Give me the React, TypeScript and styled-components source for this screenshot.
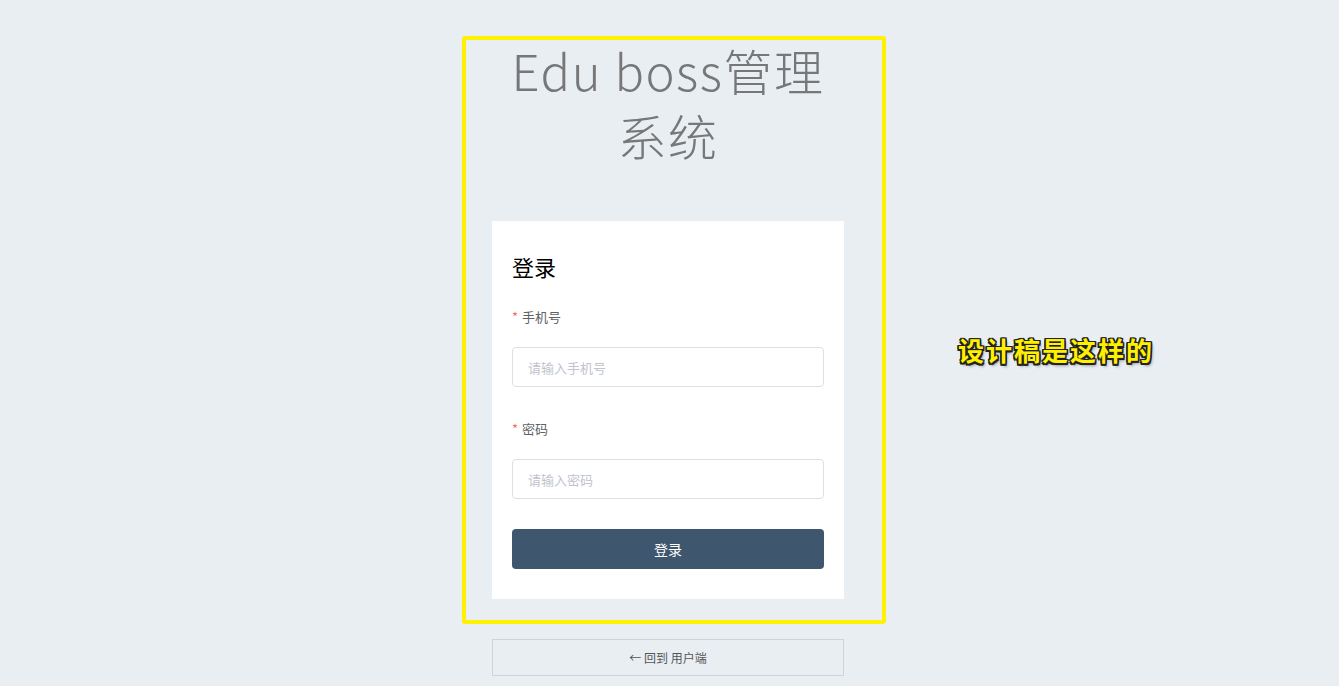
import styled, { createGlobalStyle } from 'styled-components';

const GlobalStyle = createGlobalStyle`
    html, body {
        margin: 0;
        padding: 0;
        background: #e9eef3;
        font-family: 'Noto Sans CJK SC', 'Noto Sans', sans-serif;
    }
`;

const Page = styled.div`
    min-height: 686px;
    padding: 37px 3px 0 0;
    box-sizing: border-box;
`;

const Column = styled.div`
    position: relative;
    width: 352px;
    margin: 0 auto;
`;

const Highlight = styled.div`
    position: absolute;
    left: -30px;
    top: -1px;
    width: 424px;
    height: 588px;
    border: 4px solid #fff200;
    border-radius: 3px;
    box-sizing: border-box;
    pointer-events: none;
`;

const Note = styled.div`
    position: absolute;
    left: 466px;
    top: 294px;
    white-space: nowrap;
    font-size: 26px;
    font-weight: 700;
    color: #fff000;
    letter-spacing: 2px;
    text-shadow:
        -1.5px -1.5px 0 #222, 1.5px -1.5px 0 #222, -1.5px 1.5px 0 #222, 1.5px 1.5px 0 #222,
        0 -1.5px 0 #222, 0 1.5px 0 #222, -1.5px 0 0 #222, 1.5px 0 0 #222,
        2px 3px 3px rgba(0, 0, 0, 0.35);
`;

const Title = styled.h1`
    margin: 0 0 54px;
    padding: 0 8px;
    text-align: center;
    font-size: 49px;
    font-weight: 300;
    line-height: 65px;
    color: #777;
    letter-spacing: 1.5px;
`;

const Card = styled.div`
    background: #fff;
    padding: 30px 20px;
`;

const Heading = styled.h2`
    margin: 0 0 16px;
    font-size: 22px;
    font-weight: 400;
    line-height: 30px;
    color: #000;
`;

const Field = styled.div`
    margin-bottom: 22px;
`;

const Label = styled.label`
    display: block;
    line-height: 40px;
    margin-bottom: 10px;
    font-size: 13px;
    color: #606266;

    &::before {
        content: '*';
        color: #f56c6c;
        margin-right: 4px;
    }
`;

const Input = styled.input`
    display: block;
    width: 100%;
    height: 40px;
    box-sizing: border-box;
    padding: 0 15px;
    border: 1px solid #dcdfe6;
    border-radius: 4px;
    font-family: inherit;
    font-size: 13px;
    color: #606266;
    outline: none;

    &::placeholder {
        color: #c0c4cc;
    }
`;

const SubmitButton = styled.button`
    display: block;
    width: 100%;
    height: 40px;
    margin-top: 30px;
    border: none;
    border-radius: 4px;
    background: #3e566e;
    color: #fff;
    font-family: inherit;
    font-size: 14px;
    cursor: pointer;
`;

const BackButton = styled.button`
    display: block;
    width: 100%;
    height: 37px;
    margin-top: 40px;
    border: 1px solid #cfd3d7;
    background: transparent;
    color: #555;
    font-family: inherit;
    font-size: 12px;
    cursor: pointer;
`;

const App = () => {
    return (
        <Page>
            <GlobalStyle />
            <Column>
                <Title>Edu boss管理系统</Title>
                <Card>
                    <Heading>登录</Heading>
                    <form onSubmit={(e) => e.preventDefault()}>
                        <Field>
                            <Label htmlFor="phone">手机号</Label>
                            <Input id="phone" type="text" placeholder="请输入手机号" />
                        </Field>
                        <Field>
                            <Label htmlFor="password">密码</Label>
                            <Input id="password" type="password" placeholder="请输入密码" />
                        </Field>
                        <SubmitButton type="submit">登录</SubmitButton>
                    </form>
                </Card>
                <BackButton type="button">← 回到 用户端</BackButton>
                <Highlight />
                <Note>设计稿是这样的</Note>
            </Column>
        </Page>
    );
};

export default App;
